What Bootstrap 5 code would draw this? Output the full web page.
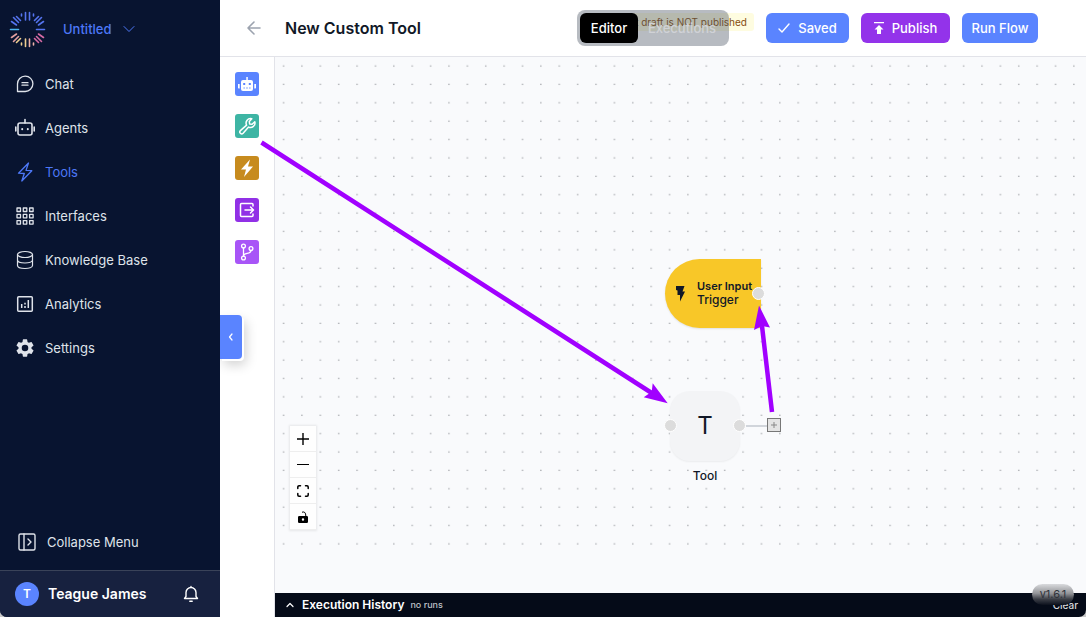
<!DOCTYPE html>
<html lang="en">
<head>
<meta charset="utf-8">
<meta name="viewport" content="width=device-width, initial-scale=1">
<title>New Custom Tool</title>
<link href="https://cdn.jsdelivr.net/npm/bootstrap@5.3.0/dist/css/bootstrap.min.css" rel="stylesheet">
<style>
  :root { --navy: #081430; --blue: #5a84ff; --violet: #9333ea; --line: #e2e3e9; }
  body { font-family: Inter, "Noto Sans", sans-serif; font-size: 13px; line-height: 20px; color: #111827; background: #c9c9c9; }
  svg { display: block; flex: none; }
  .stroke { fill: none; stroke: currentColor; stroke-linecap: round; stroke-linejoin: round; }
  .app { border-radius: 0 0 7px 7px; overflow: hidden; background: #fff; }

  .side { width: 220px; background: var(--navy); color: #dfe3ea; }
  .brand { height: 58px; padding-left: 9px; gap: 17px; color: #4d78f7; }
  .brand button { gap: 10px; font-weight: 500; }
  .plain { background: none; border: 0; padding: 0; color: inherit; }
  .menu { padding-top: 4px; }
  .menu a { height: 44px; padding-left: 15px; gap: 10px; color: #dfe3ea; text-decoration: none; }
  .menu a.active { color: #4d78f7; }
  .fold { height: 56px; padding-left: 17px; gap: 10px; }
  .user { height: 47px; padding: 0 20px 0 15px; gap: 9px; background: #17213f; border-top: 1px solid #3a4359; font-size: 14px; font-weight: 600; color: #fff; }
  .avatar { width: 24px; height: 24px; background: var(--blue); font-size: 12px; }

  .topbar { height: 57px; padding: 0 48px 0 26px; border-bottom: 1px solid var(--line); }
  .topbar h1 { font-size: 16px; line-height: 24px; font-weight: 600; margin: 0 0 0 23px; }
  .back { color: #9ca3af; }
  .tabs { margin-right: 37px; }
  .switch { position: relative; width: 152px; height: 36px; padding: 3px; border-radius: 8px; background: rgba(75, 85, 99, .4); }
  .switch button { border: 0; border-radius: 6px; height: 30px; padding: 0; }
  .switch .on { width: 58px; background: #000; color: #fff; font-weight: 500; }
  .switch .off { width: 88px; background: none; color: #d0d2d6; font-weight: 500; }
  .draft { position: absolute; right: -25px; top: 3px; height: 18px; padding: 0 7px; border-radius: 3px; background: #fefce0; color: #854d0e; font-size: 10px; line-height: 18px; white-space: nowrap; }
  .act { height: 30px; border: 0; border-radius: 6px; padding: 0; gap: 8px; color: #fff; background: var(--blue); font-weight: 500; }
  .saved { width: 83px; } .publish { width: 89px; background: var(--violet); } .run { width: 76px; }

  .palette { width: 55px; padding-top: 15px; gap: 18px; border-right: 1px solid var(--line); }
  .palette button { width: 24px; height: 24px; border: 0; border-radius: 3px; padding: 0; color: #fff; }
  .drawer { position: absolute; left: 220px; top: 315px; width: 22px; height: 44px; border: 0; padding: 0; border-radius: 0 4px 4px 0; background: var(--blue); color: #fff; box-shadow: 2px 2px 0 #fff, 4px 6px 12px rgba(0,0,0,.18); clip-path: inset(-20px -20px -20px 0); }

  .canvas { background: #f9fafc; padding-bottom: 41px; }
  .node, .knob, .wire, .plus, .caption, .zoomer, .marks { position: absolute; }
  .trigger { left: 390px; top: 202px; width: 96px; height: 69px; padding-left: 11px; gap: 12px; border-radius: 35px 0 0 35px; background: #f8c728; font-size: 12px; line-height: 14px; font-weight: 500; box-shadow: 0 1px 2px rgba(0,0,0,.1); }
  .trigger b { display: block; font-size: 11px; line-height: 13px; font-weight: 600; white-space: nowrap; }
  .tool { left: 395px; top: 334px; width: 70px; height: 70px; border-radius: 20px; background: #f3f4f6; font-size: 24px; box-shadow: 0 1px 2px rgba(0,0,0,.06); }
  .caption { left: 395px; top: 409px; width: 70px; text-align: center; font-size: 12px; font-weight: 500; }
  .knob { width: 13px; height: 13px; border: 1px solid #fff; border-radius: 50%; background: #dcdcdc; }
  .wire { left: 471px; top: 368px; width: 22px; height: 2px; background: #d1d5db; }
  .plus { left: 492px; top: 361px; width: 14px; height: 14px; border: 1px solid #777; background: #e4e4e4; color: #777; padding: 0; }
  .zoomer { left: 15px; bottom: 63px; width: 26px; box-shadow: 0 0 2px 1px rgba(0,0,0,.08); }
  .zoomer button { height: 26px; border: 0; border-bottom: 1px solid #eee; padding: 0; background: #fefefe; color: #000; }
  .marks { left: -55px; top: 0; pointer-events: none; }

  .history { height: 24px; padding: 0 8px 0 11px; background: #050b18; color: #fff; }
  .history strong { font-size: 12px; font-weight: 600; margin: 0 6px 0 8px; }
  .history small, .history .clear { font-size: 9px; color: #bfc2c9; font-weight: 500; }
  .history .clear { font-size: 10px; color: #d7d9dd; }
  .version { position: absolute; right: 12px; bottom: 12px; width: 42px; height: 21px; border-radius: 11px; background: linear-gradient(#d9dadd, #929397 45%, #3c3f47 72%, #0b101c); color: #30333a; font-size: 11px; line-height: 21px; text-align: center; }
</style>
</head>
<body>
<div class="app d-flex vh-100 position-relative">
  <aside class="side d-flex flex-column flex-shrink-0">
    <div class="brand d-flex align-items-center">
      <svg width="37" height="37" viewBox="-18.500 -18.500 37 37" fill="none" stroke-width="1.600" stroke-linecap="round">
        <g stroke="#5574ee"><path d="M-2-9.500V-17M2-9.500V-17M-6-13.500V-15.500M6-13.500V-15.500M-7-9-11-13M-9-7-14-12M-11-4.500-16-8M7-9 11-13M9-7 14-12M11-4.500 16-8M9 0H17"/></g>
        <path stroke="#4db4ec" d="M-9 0H-17"/>
        <g stroke="#e3a0a0"><path d="M-11 4.500-16 8M-9 7-14 12"/></g>
        <g stroke="#efcf91"><path d="M-7 9-11 13M-6 13.500V15.500M-2 9.500V17"/></g>
        <path stroke="#edb1a8" d="M2 9.500V17M6 13.500V15.500"/>
        <g stroke="#d66ba5"><path d="M7 9 11 13M9 7 14 12M11 4.500 16 8"/></g>
      </svg>
      <button class="plain d-flex align-items-center" type="button">Untitled
        <svg class="stroke" width="14" height="14" viewBox="0 0 14 14"><path d="m2 4.500 5 5 5-5"/></svg>
      </button>
    </div>
    <nav class="menu d-flex flex-column" aria-label="Main">
      <a class="d-flex align-items-center" href="#"><svg class="stroke" width="20" height="20" viewBox="0 0 20 20" stroke-width="1.300"><path d="M2.500 17.500V10a7.700 7.700 0 1 1 7.500 7.500ZM7 8.700h6M7 11.200h6"/></svg>Chat</a>
      <a class="d-flex align-items-center" href="#"><svg class="stroke" width="20" height="20" viewBox="0 0 20 20" stroke-width="1.600"><rect x="3" y="5" width="14" height="12" rx="2"/><path d="M10 5V1.500M.800 9v4M19.200 9v4"/><path d="M7.200 11v.200M12.800 11v.200" stroke-width="2"/></svg>Agents</a>
      <a class="active d-flex align-items-center" href="#"><svg class="stroke" width="20" height="20" viewBox="0 0 20 20" stroke-width="1.300"><path d="M13.500 1 3.500 11.200 9.300 11.500 6.800 19 16.800 8.700 11 8.400Z"/></svg>Tools</a>
      <a class="d-flex align-items-center" href="#"><svg class="stroke" width="20" height="20" viewBox="0 0 20 20" stroke-width="1.300"><path d="M2 2h3.500v3.500H2ZM8.300 2h3.500v3.500H8.300ZM14.600 2h3.500v3.500h-3.500ZM2 8.300h3.500v3.500H2ZM8.300 8.300h3.500v3.500H8.300ZM14.600 8.300h3.500v3.500h-3.500ZM2 14.600h3.500v3.500H2ZM8.300 14.600h3.500v3.500H8.300ZM14.600 14.600h3.500v3.500h-3.500Z"/></svg>Interfaces</a>
      <a class="d-flex align-items-center" href="#"><svg class="stroke" width="20" height="20" viewBox="0 0 20 20" stroke-width="1.200"><ellipse cx="10" cy="4.500" rx="7.500" ry="3"/><path d="M2.500 4.500v11c0 4 15 4 15 0v-11M2.500 10c0 4 15 4 15 0"/></svg>Knowledge Base</a>
      <a class="d-flex align-items-center" href="#"><svg class="stroke" width="20" height="20" viewBox="0 0 20 20" stroke-width="1.500"><rect x="2.700" y="2.700" width="14.600" height="14.600" rx="1"/><path stroke-linecap="butt" d="M6.700 14v-4M10 14v-2M10 10.500V8.700M13.300 14V6"/></svg>Analytics</a>
      <a class="d-flex align-items-center" href="#"><svg width="20" height="20" viewBox="1 1 22 22" fill="currentColor"><path d="M19.140 12.940a7 7 0 0 0 0-1.880l2.030-1.580a.500.500 0 0 0 .120-.610l-1.920-3.320a.500.500 0 0 0-.590-.220l-2.390.960a7 7 0 0 0-1.620-.940l-.360-2.540a.500.500 0 0 0-.480-.410h-3.840a.500.500 0 0 0-.470.410l-.360 2.540a7 7 0 0 0-1.620.940l-2.390-.960a.500.500 0 0 0-.590.220L2.740 8.870a.500.500 0 0 0 .120.610l2.030 1.580a7 7 0 0 0 0 1.880l-2.030 1.580a.500.500 0 0 0-.120.610l1.920 3.320c.120.220.370.290.590.220l2.390-.960c.500.380 1.030.700 1.620.940l.360 2.540c.050.240.240.410.480.410h3.840c.240 0 .440-.170.470-.410l.360-2.540a7 7 0 0 0 1.620-.940l2.390.960c.220.080.470 0 .590-.220l1.920-3.320a.500.500 0 0 0-.120-.610ZM12 15.600a3.600 3.600 0 1 1 0-7.200 3.600 3.600 0 0 1 0 7.200Z"/></svg>Settings</a>
    </nav>
    <button class="plain fold d-flex align-items-center mt-auto" type="button">
      <svg class="stroke" width="20" height="20" viewBox="0 0 20 20" stroke-width="1.400"><rect x="2" y="2" width="16" height="16" rx="1.500"/><path d="M7 2v16M11 7l3 3-3 3"/></svg>Collapse Menu
    </button>
    <div class="user d-flex align-items-center">
      <span class="avatar rounded-circle d-flex align-items-center justify-content-center">T</span>
      <span>Teague James</span>
      <button class="plain ms-auto" type="button" aria-label="Notifications"><svg class="stroke" width="18" height="18" viewBox="0 0 18 18" stroke-width="1.400"><path d="M2.500 13.500h13L14 11.500V7.500a5 5 0 0 0-10 0v4ZM9 2.500V1.500M7.800 16.200h2.400"/></svg></button>
    </div>
  </aside>

  <main class="d-flex flex-column flex-grow-1">
    <header class="topbar d-flex align-items-center">
      <button class="plain back" type="button" aria-label="Back"><svg class="stroke" width="16" height="16" viewBox="0 0 16 16" stroke-width="1.600"><path d="M14 8H2M8 2 2 8l6 6"/></svg></button>
      <h1>New Custom Tool</h1>
      <div class="tabs position-relative ms-auto">
        <span class="draft">Current draft is NOT published</span>
        <div class="switch d-flex">
          <button class="on" type="button">Editor</button>
          <button class="off" type="button">Executions</button>
        </div>
      </div>
      <div class="d-flex" style="gap:12px">
        <button class="act saved d-flex align-items-center justify-content-center" type="button"><svg class="stroke" width="12" height="12" viewBox="0 0 12 12" stroke-width="1.400"><path d="m1 7 3 3 7-8"/></svg>Saved</button>
        <button class="act publish d-flex align-items-center justify-content-center" type="button"><svg width="10" height="12" viewBox="0 0 10 12" fill="currentColor"><path d="M0 0h10v1.300H0ZM5 3l4.500 4.500H7V12H3V7.500H.500Z"/></svg>Publish</button>
        <button class="act run" type="button">Run Flow</button>
      </div>
    </header>
    <div class="d-flex flex-grow-1">
      <div class="palette d-flex flex-column align-items-center flex-shrink-0">
        <button type="button" aria-label="Agent" style="background:#5a84ff"><svg width="24" height="24" viewBox="0 0 24 24"><path fill="#fff" d="M11.300 5h1.500v3H16a2 2 0 0 1 2 2v7a2 2 0 0 1-2 2H8a2 2 0 0 1-2-2v-7a2 2 0 0 1 2-2h3.300ZM3 12h1.700v4.500H3.500L3 16ZM19.300 12H21v4l-.500.500h-1.200Z"/><path fill="#5a84ff" d="M8.200 11h2v2h-2ZM13.800 11h2v2h-2ZM8.500 15.500h1.300v1H8.500ZM11.300 15.500h1.400v1h-1.400ZM14.200 15.500h1.300v1h-1.300Z"/></svg></button>
        <button type="button" aria-label="Tool" style="background:#3eb5a4"><svg class="stroke" width="24" height="24" viewBox="0 0 24 24" stroke-width="1.500"><path d="M16.800 4.700a4.500 4.500 0 0 0-5.200 6.400l-6.200 5.500a1.900 1.900 0 1 0 2.700 2.700l5.500-6.200a4.500 4.500 0 0 0 6.200-5.300l-2.700 2.500-2.500-.300-.300-2.500Z"/></svg></button>
        <button type="button" aria-label="Trigger" style="background:#c78b1e"><svg width="24" height="24" viewBox="0 0 24 24" fill="#fff"><path d="M15 3.500 6 13.500h5l-2 7.500 9-10.500h-5Z"/></svg></button>
        <button type="button" aria-label="Output" style="background:#9130e6"><svg class="stroke" width="24" height="24" viewBox="0 0 24 24" stroke-width="1.500"><path d="M18 8V6.500a1 1 0 0 0-1-1H6.500a1 1 0 0 0-1 1v11a1 1 0 0 0 1 1H17a1 1 0 0 0 1-1V16M10 12h8M15.500 9l3 3-3 3"/></svg></button>
        <button type="button" aria-label="Branch" style="background:#a855f7"><svg class="stroke" width="24" height="24" viewBox="0 0 24 24" stroke-width="1.300"><circle cx="8.500" cy="6" r="1.900"/><circle cx="8.500" cy="18" r="1.900"/><circle cx="16" cy="8.500" r="1.900"/><path d="M8.500 8v8M16 10.500c0 4-7.500 2-7.500 5.500"/></svg></button>
      </div>
      <div class="d-flex flex-column flex-grow-1">
        <section class="canvas position-relative d-flex flex-grow-1" aria-label="Flow canvas">
          <svg class="w-100 h-100"><defs><pattern id="dots" width="18.380" height="18.380" patternUnits="userSpaceOnUse"><rect x="7.900" y="8.400" width="1.300" height="1.300" fill="#a3a5aa"/></pattern></defs><rect width="100%" height="100%" fill="url(#dots)"/></svg>
          <div class="node trigger d-flex align-items-center">
            <svg width="9" height="16" viewBox="0 0 9 16" fill="#111827"><path d="M0 0h8.500L6.500 5.500H9L4 15.500V9H1.500V4.500L0 4Z"/></svg>
            <span><b>User Input</b>Trigger</span>
          </div>
          <span class="knob" style="left:477px;top:230px"></span>
          <div class="node tool d-flex align-items-center justify-content-center">T</div>
          <span class="knob" style="left:389px;top:362px"></span>
          <span class="knob" style="left:458px;top:362px"></span>
          <span class="wire"></span>
          <button class="plus d-flex align-items-center justify-content-center" type="button" aria-label="Add step"><svg width="6" height="6" viewBox="0 0 6 6" stroke="#888"><path d="M3 0v6M0 3h6"/></svg></button>
          <span class="caption">Tool</span>
          <div class="zoomer d-flex flex-column">
            <button class="d-flex align-items-center justify-content-center" type="button" aria-label="Zoom in"><svg width="12" height="12" stroke="#000" stroke-width="1.400"><path d="M6 0v12M0 6h12"/></svg></button>
            <button class="d-flex align-items-center justify-content-center" type="button" aria-label="Zoom out"><svg width="12" height="12" stroke="#000"><path d="M0 5.500h12"/></svg></button>
            <button class="d-flex align-items-center justify-content-center" type="button" aria-label="Fit view"><svg class="stroke" width="12" height="12" viewBox="0 0 12 12" stroke-width="1.500"><path d="M.800 3.500V2A1.200 1.200 0 0 1 2 .800h1.500M8.500.800H10A1.200 1.200 0 0 1 11.200 2v1.500M11.200 8.500V10a1.200 1.200 0 0 1-1.200 1.200H8.500M3.500 11.200H2A1.200 1.200 0 0 1 .800 10V8.500"/></svg></button>
            <button class="d-flex align-items-center justify-content-center" type="button" aria-label="Lock"><svg width="10" height="12" viewBox="0 0 10 12"><path fill="none" stroke="#000" d="M4 1.200Q7.800 0 7.800 5"/><path fill-rule="evenodd" d="M1.200 5h7.600A1.200 1.200 0 0 1 10 6.200v4.600A1.200 1.200 0 0 1 8.800 12H1.200A1.200 1.200 0 0 1 0 10.800V6.200A1.200 1.200 0 0 1 1.200 5ZM5 7.300a1.200 1.200 0 1 0 0 2.400 1.200 1.200 0 0 0 0-2.400Z"/></svg></button>
          </div>
          <svg class="marks" width="600" height="480" viewBox="220 57 600 480" fill="#a100ff" stroke="#a100ff">
            <path stroke-width="4.500" d="m261.500 142.500 391 251M772 412l-10-86"/>
            <path stroke="none" d="m667.700 403.300-15-20-1 8.500-8 5.500ZM759 305.500l-5 24.500 8-4 8 1.500Z"/>
          </svg>
        </section>
        <footer class="history d-flex align-items-center">
          <svg class="stroke" width="8" height="8" viewBox="0 0 8 8" stroke-width="1.200"><path d="m1 5.500 3-3 3 3"/></svg>
          <strong>Execution History</strong><small>no runs</small>
          <button class="plain clear ms-auto" type="button">Clear</button>
        </footer>
      </div>
    </div>
  </main>
  <button class="drawer d-flex align-items-center justify-content-center" type="button" aria-label="Close panel"><svg class="stroke" width="8" height="8" viewBox="0 0 8 8" stroke-width="1.200"><path d="M5 1 2.500 4 5 7"/></svg></button>
  <span class="version">v1.6.1</span>
</div>
<script src="https://cdn.jsdelivr.net/npm/bootstrap@5.3.0/dist/js/bootstrap.bundle.min.js"></script>
</body>
</html>
